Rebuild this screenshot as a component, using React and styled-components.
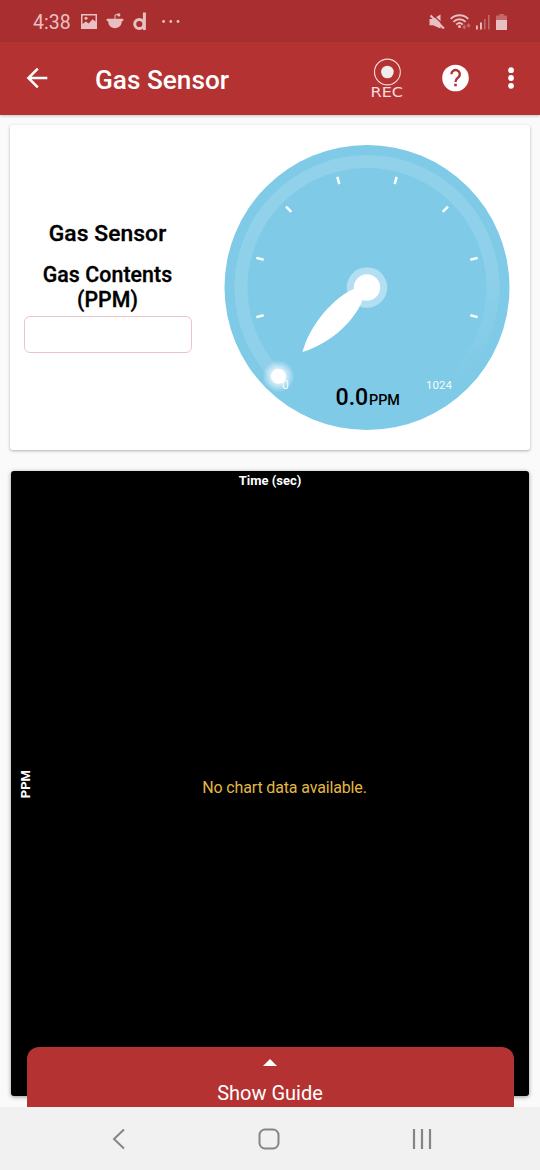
import React from "react";
import styled, { createGlobalStyle } from "styled-components";

const GlobalStyle = createGlobalStyle`
  *, *::before, *::after { box-sizing: border-box; }
  html, body { margin: 0; padding: 0; }
  body { font-family: Roboto, "Liberation Sans", sans-serif; background: #fafafa; }
  svg { display: block; flex: none; }
`;

const Screen = styled.div`
  width: 540px;
  height: 1170px;
  display: flex;
  flex-direction: column;
  overflow: hidden;
  background: #fafafa;
  color: #000;
`;

const StatusBar = styled.div`
  height: 42px;
  flex: none;
  display: flex;
  align-items: center;
  justify-content: space-between;
  padding: 1px 33px 0 33px;
  background: #a92e2f;
  color: #e9c0c1;
`;

const StatusGroup = styled.div`
  display: flex;
  align-items: center;
  gap: ${(p) => p.$gap}px;
`;

const Clock = styled.span`
  width: 39px;
  padding-top: 2px;
  font-size: 19.5px;
  line-height: 24px;
  white-space: nowrap;
`;

const Toolbar = styled.header`
  height: 73px;
  flex: none;
  display: flex;
  align-items: center;
  padding: 0 25px 1px 26px;
  background: #b53233;
  color: #fff;
  box-shadow: 0 1px 3px rgba(0, 0, 0, 0.22);
`;

const Title = styled.h1`
  flex: 1;
  margin: 3px 0 0 47px;
  font-size: 26.2px;
  line-height: 32px;
  font-weight: 500;
`;

const RecordButton = styled.div`
  width: 36px;
  margin-right: 36px;
  padding-bottom: 1px;
  display: flex;
  flex-direction: column;
  align-items: center;
  color: #f6dddd;
  font: 14.6px/13px "DejaVu Sans", sans-serif;
`;

const RecordLabel = styled.span`
  transform: scaleX(1.1);
  margin-top: -1px;
`;

const IconSlot = styled.div`
  margin-left: ${(p) => p.$before || 0}px;
  margin-right: ${(p) => p.$after || 0}px;
`;

const Content = styled.main`
  flex: 1;
  min-height: 0;
  display: flex;
  flex-direction: column;
  gap: 21px;
  padding: 10px 10px 0;
`;

const SensorCard = styled.section`
  height: 325px;
  flex: none;
  display: flex;
  background: #fff;
  border-radius: 3px;
  box-shadow: 0 1px 3px rgba(0, 0, 0, 0.3);
`;

const Readout = styled.div`
  width: 195px;
  display: flex;
  flex-direction: column;
  align-items: center;
  padding-top: 95px;
`;

const SensorName = styled.div`
  font-size: 22.8px;
  line-height: 28px;
  font-weight: 500;
  white-space: nowrap;
  letter-spacing: 0.1px;
  -webkit-text-stroke: 0.35px #000;
`;

const QuantityLabel = styled.div`
  margin-top: 14px;
  width: 150px;
  text-align: center;
  font-size: 21.3px;
  line-height: 25px;
  font-weight: 500;
  letter-spacing: 0.1px;
  -webkit-text-stroke: 0.35px #000;
`;

const ValueBox = styled.div`
  width: 168px;
  height: 37px;
  margin-top: 4px;
  border: 1px solid #efc3ca;
  border-radius: 6px;
`;

const GaugeSlot = styled.div`
  padding: 19px 0 0 19px;
`;

const ChartCard = styled.section`
  height: 625px;
  flex: none;
  margin: 0 1px;
  display: grid;
  grid-template-columns: 30px 1fr;
  grid-template-rows: 20px 605px;
  background: #000;
  border-radius: 3px;
  box-shadow: 0 1px 4px rgba(0, 0, 0, 0.4);
`;

const AxisTop = styled.div`
  grid-column: 1 / 3;
  text-align: center;
  color: #fff;
  font-size: 13px;
  line-height: 20px;
  font-weight: 700;
`;

const AxisSide = styled.div`
  display: flex;
  align-items: center;
  justify-content: center;
  color: #fff;
  font-size: 13px;
  font-weight: 700;

  span {
    writing-mode: vertical-rl;
    transform: rotate(180deg);
    margin-bottom: 19px;
    line-height: 16px;
  }
`;

const EmptyMessage = styled.div`
  display: flex;
  align-items: center;
  justify-content: center;
  padding: 0 1px 13px 0;
  color: #e3b845;
  font-size: 16px;
  letter-spacing: -0.15px;
`;

const GuideSheet = styled.div`
  height: 60px;
  flex: none;
  position: relative;
  z-index: 1;
  width: 487px;
  margin: -60px 0 0 26.5px;
  display: flex;
  flex-direction: column;
  align-items: center;
  padding-top: 12px;
  border-radius: 12px 12px 0 0;
  background: #b53233;
  color: #fff;
  font-size: 20px;
  line-height: 24px;
  gap: 15px;
`;

const NavBar = styled.nav`
  height: 63px;
  flex: none;
  display: flex;
  align-items: center;
  justify-content: space-between;
  padding: 0 108px 0 112px;
  background: #f1f1f1;
`;

const TICKS = [-105, -75, -45, -15, 15, 45, 75, 105];

function PictureIcon() {
  return (
    <svg width="16" height="15" viewBox="0 0 16 15">
      <path fill="currentColor" fillRule="evenodd" d="M0 0h16v15H0zM1.500 1.500v8.500l3.400-2.500 2.700 2 4-4.300 2.900 2.300v-6z" />
      <circle cx="5" cy="4.300" r="1.500" fill="currentColor" />
    </svg>
  );
}

function RedditIcon() {
  return (
    <svg width="18" height="17" viewBox="0 0 18 17" fill="currentColor">
      <path d="M2.200 5.800h13.600c1.800-.4 2.600 1.800 0 2.800-.2 3.800-2.700 6.600-6.800 6.600S2.400 12.400 2.200 8.600C-.5 7.600.4 5.400 2.200 5.800Z" />
      <path d="M9 6.200V2l3-.8" fill="none" stroke="currentColor" strokeWidth="1" />
      <circle cx="12.800" cy="1.900" r="1.600" />
    </svg>
  );
}

function LetterDIcon() {
  return (
    <svg width="14" height="19" viewBox="0 0 14 19" fill="none" stroke="currentColor" strokeWidth="3">
      <circle cx="6.300" cy="12" r="4.600" />
      <path d="M11.400 .5v17.500" />
    </svg>
  );
}

function MoreDots() {
  return (
    <svg width="18" height="4" viewBox="0 0 18 4" fill="currentColor">
      <circle cx="1.600" cy="1.500" r="1.400" />
      <circle cx="8.800" cy="1.500" r="1.400" />
      <circle cx="16" cy="1.500" r="1.400" />
    </svg>
  );
}

function MutedIcon() {
  return (
    <svg width="16" height="16" viewBox="0 0 16 16">
      <path d="M.5 5H4l7.500-4.500v14L4 11.200H.5z" fill="currentColor" />
      <path d="M2.500-.5 16 12.300" stroke="#a92e2f" strokeWidth="1.300" />
      <path d="M1.500 1.500 14.900 14.500" stroke="currentColor" strokeWidth="2.200" />
    </svg>
  );
}

function WifiIcon() {
  return (
    <svg width="21" height="16" viewBox="0 0 21 16">
      <g fill="none" stroke="currentColor" strokeWidth="1.900">
        <path d="M.8 4.800c4.700-4.800 12.700-4.800 17.400 0" />
        <path d="M3.400 7.800c3.400-3.400 8.800-3.400 12.200 0" />
        <path d="M6.200 10.600c2-1.900 4.700-1.900 6.600 0" />
      </g>
      <circle cx="9.500" cy="12.500" r="1.500" fill="currentColor" />
      <path d="m12.300 13.200 2-2.600 2 2.600-2 2.400zM16.600 11.500l2-2.400 2 2.400-2 2.400z" fill="currentColor" opacity=".4" />
    </svg>
  );
}

function SignalIcon() {
  return (
    <svg width="15" height="16" viewBox="0 0 15 16" fill="currentColor">
      <path d="M0 11.500h1.800v4H0zM4 8.500h1.900v7H4z" />
      <path d="M8 5h1.600v10.500H8zM12 1h1.600v14.500H12z" opacity=".4" />
    </svg>
  );
}

function BatteryIcon() {
  return (
    <svg width="11" height="16" viewBox="0 0 11 16" fill="currentColor">
      <path d="M3.300 0h4.400v1.500H11V6H0V1.500h3.300z" opacity=".4" />
      <path d="M0 6h11v10H0z" />
    </svg>
  );
}

function BackArrow() {
  return (
    <svg width="22" height="22" viewBox="0 0 22 22" fill="none" stroke="#fff" strokeWidth="2.500">
      <path d="M21.300 11H2.500M11.800 1.700 2.400 11l9.400 9.300" />
    </svg>
  );
}

function RecordIcon() {
  return (
    <svg width="28" height="28" viewBox="0 0 28 28">
      <circle cx="14.400" cy="14" r="12.900" fill="none" stroke="#f6dddd" strokeWidth="1.100" />
      <circle cx="14.400" cy="14" r="6.300" fill="#f0eded" />
    </svg>
  );
}

function HelpIcon() {
  return (
    <svg width="28" height="28" viewBox="0 0 28 28">
      <circle cx="14.500" cy="14" r="13.300" fill="#fff" />
      <path d="M10.400 10.200a4.200 4.200 0 1 1 7.200 2.900c-1.800 1.600-3.100 2.300-3.100 4.900" fill="none" stroke="#b53233" strokeWidth="2.400" />
      <path d="M13.200 19.700h2.600v2.600h-2.600z" fill="#b53233" />
    </svg>
  );
}

function OverflowIcon() {
  return (
    <svg width="8" height="24" viewBox="0 0 8 24" fill="#fff">
      <circle cx="4" cy="4.200" r="2.900" />
      <circle cx="4" cy="12" r="2.900" />
      <circle cx="4" cy="19.800" r="2.900" />
    </svg>
  );
}

const GaugeText = styled.text`
  font-family: Roboto, sans-serif;
  font-size: ${(p) => p.$size}px;
  font-weight: ${(p) => p.$weight || 400};
  fill: ${(p) => p.$fill};
`;

function Gauge({ value, max, unit }) {
  return (
    <svg width="286" height="287" viewBox="0 0 286 287">
      <defs>
        <linearGradient id="track" gradientUnits="userSpaceOnUse" x1="143" y1="11" x2="256" y2="246">
          <stop offset="0" stopColor="#fff" stopOpacity=".14" />
          <stop offset=".6" stopColor="#fff" stopOpacity=".12" />
          <stop offset=".92" stopColor="#fff" stopOpacity=".01" />
        </linearGradient>
        <radialGradient id="glow">
          <stop offset=".4" stopColor="#fff" stopOpacity=".75" />
          <stop offset="1" stopColor="#fff" stopOpacity="0" />
        </radialGradient>
      </defs>
      <g transform="translate(0 .5)">
        <circle cx="143" cy="143" r="142.500" fill="#7fcae7" />
        <path d="M53.900 232.100A126 126 0 1 1 232.100 232.100" fill="none" stroke="url(#track)" strokeWidth="13" />
        {TICKS.map((angle) => (
          <path
            key={angle}
            d="M143 28.500v7.500"
            transform={`rotate(${angle} 143 143)`}
            stroke="#fff"
            strokeWidth="2.500"
          />
        ))}
        <circle cx="143" cy="143" r="20.300" fill="#b2dff1" />
        <path d="M78.500 207.500C85 182 109 152 133 143L140 151C134 174 107 199 78.500 207.500Z" fill="#fff" />
        <circle cx="143" cy="143" r="13.200" fill="#fff" />
      </g>
      <GaugeText x="58" y="244.500" $size={12} $fill="#f4fbfd">0</GaugeText>
      <GaugeText x="202" y="244.500" $size={11.500} $fill="#f4fbfd">{max}</GaugeText>
      <circle cx="54.500" cy="232.300" r="16" fill="url(#glow)" />
      <circle cx="54.500" cy="232.300" r="7.500" fill="#fff" />
      <GaugeText x="111.500" y="260.500" $size={23.200} $weight={500} $fill="#000">{value}</GaugeText>
      <GaugeText x="145" y="260.500" $size={14.400} $weight={500} $fill="#000">{unit}</GaugeText>
    </svg>
  );
}

export default function App() {
  return (
    <Screen>
      <GlobalStyle />
      <StatusBar>
        <StatusGroup $gap={9}>
          <Clock>4:38</Clock>
          <PictureIcon />
          <RedditIcon />
          <LetterDIcon />
          <IconSlot $before={6}><MoreDots /></IconSlot>
        </StatusGroup>
        <StatusGroup $gap={5}>
          <MutedIcon />
          <WifiIcon />
          <SignalIcon />
          <BatteryIcon />
        </StatusGroup>
      </StatusBar>
      <Toolbar>
        <BackArrow />
        <Title>Gas Sensor</Title>
        <RecordButton>
          <RecordIcon />
          <RecordLabel>REC</RecordLabel>
        </RecordButton>
        <IconSlot $after={38}><HelpIcon /></IconSlot>
        <OverflowIcon />
      </Toolbar>
      <Content>
        <SensorCard>
          <Readout>
            <SensorName>Gas Sensor</SensorName>
            <QuantityLabel>Gas Contents (PPM)</QuantityLabel>
            <ValueBox />
          </Readout>
          <GaugeSlot>
            <Gauge value="0.0" max={1024} unit="PPM" />
          </GaugeSlot>
        </SensorCard>
        <ChartCard>
          <AxisTop>Time (sec)</AxisTop>
          <AxisSide><span>PPM</span></AxisSide>
          <EmptyMessage>No chart data available.</EmptyMessage>
        </ChartCard>
      </Content>
      <GuideSheet>
        <svg width="14" height="7" viewBox="0 0 14 7"><path d="M0 7 7 0l7 7z" fill="#fff" /></svg>
        Show Guide
      </GuideSheet>
      <NavBar>
        <svg width="14" height="22" viewBox="0 0 14 22" fill="none" stroke="#858585" strokeWidth="2"><path d="M12 1.500 2 11l10 9.500" /></svg>
        <svg width="22" height="22" viewBox="0 0 22 22" fill="none" stroke="#858585" strokeWidth="2"><rect x="1.500" y="1.500" width="19" height="19" rx="5.500" /></svg>
        <svg width="20" height="20" viewBox="0 0 20 20" stroke="#858585" strokeWidth="2.200"><path d="M2 0v20M10 0v20M18 0v20" /></svg>
      </NavBar>
    </Screen>
  );
}
